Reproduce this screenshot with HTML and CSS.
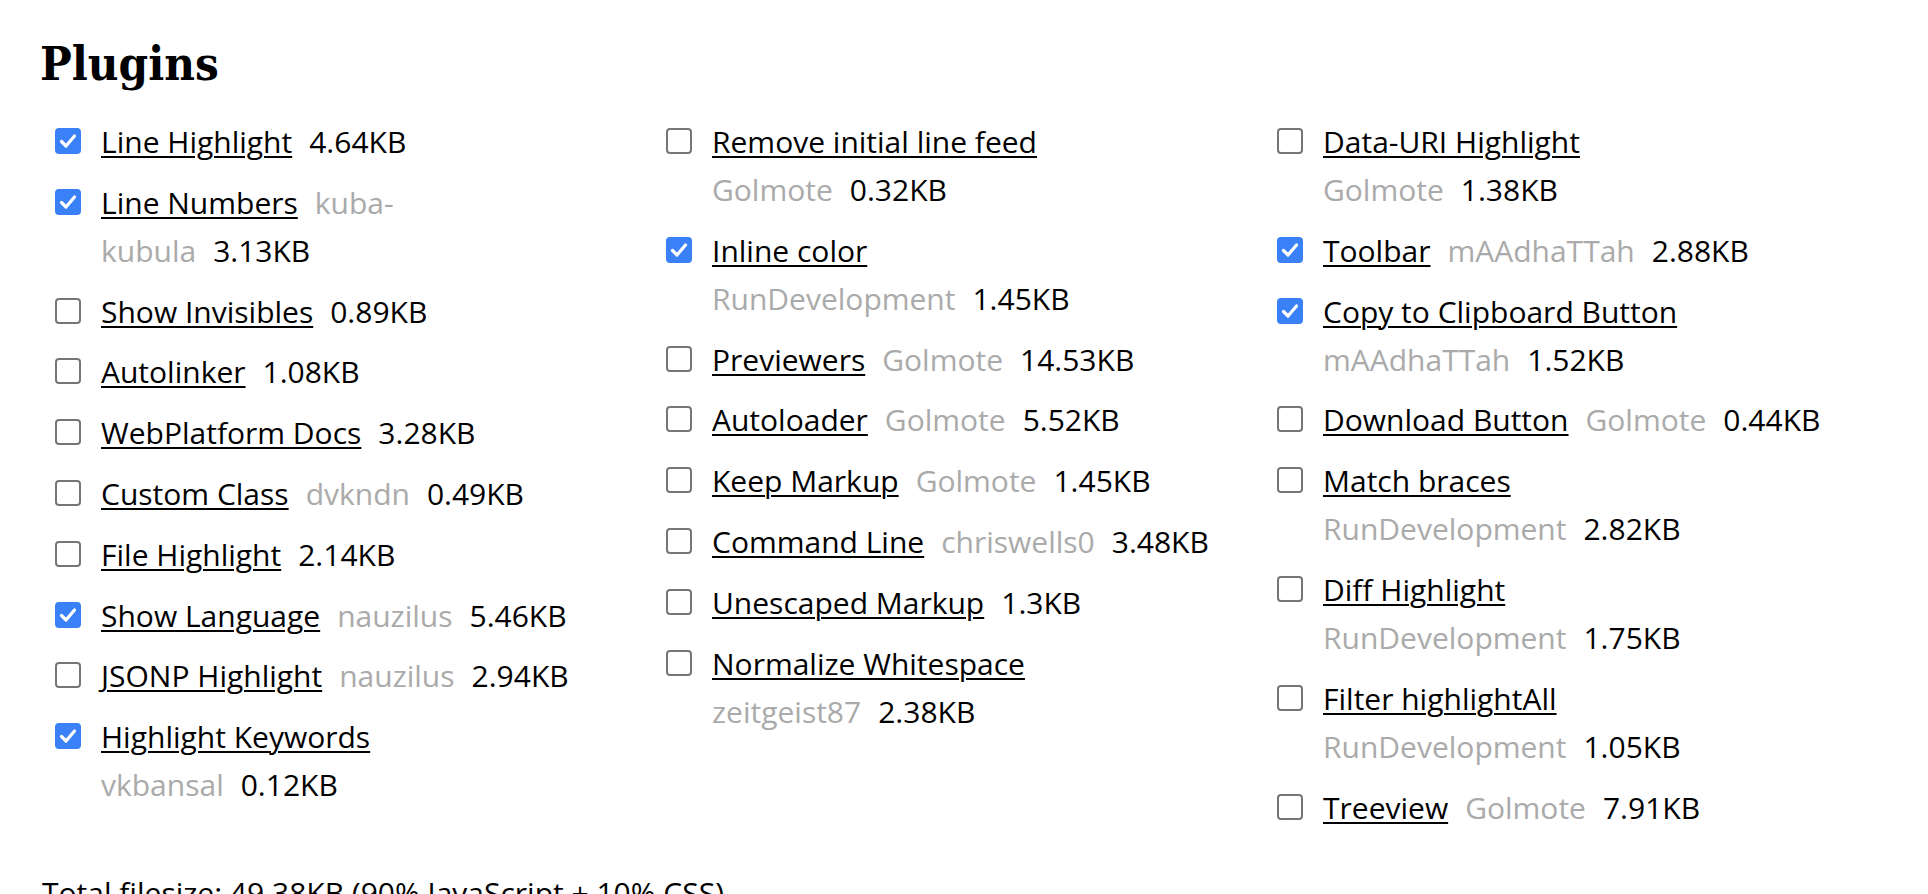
FILE: index.html
```html
<!DOCTYPE html>
<html lang="en">
<head>
<meta charset="utf-8">
<title>Plugins</title>
<link rel="stylesheet" href="styles.css">
</head>
<body>
<main class="page">
  <h2 class="title">Plugins</h2>
  <div class="plugins">
    <ul class="col">
      <li class="item"><span class="box on"><svg viewBox="0 0 26 26"><path d="M6.5 13.5l4.5 4.5 8.5-10"/></svg></span><span class="text"><a class="name" href="#">Line Highlight</a><span class="size">4.64KB</span></span></li>
      <li class="item"><span class="box on"><svg viewBox="0 0 26 26"><path d="M6.5 13.5l4.5 4.5 8.5-10"/></svg></span><span class="text"><a class="name" href="#">Line Numbers</a><span class="owner">kuba-<br>kubula</span><span class="size">3.13KB</span></span></li>
      <li class="item"><span class="box"></span><span class="text"><a class="name" href="#">Show Invisibles</a><span class="size">0.89KB</span></span></li>
      <li class="item"><span class="box"></span><span class="text"><a class="name" href="#">Autolinker</a><span class="size">1.08KB</span></span></li>
      <li class="item"><span class="box"></span><span class="text"><a class="name" href="#">WebPlatform Docs</a><span class="size">3.28KB</span></span></li>
      <li class="item"><span class="box"></span><span class="text"><a class="name" href="#">Custom Class</a><span class="owner">dvkndn</span><span class="size">0.49KB</span></span></li>
      <li class="item"><span class="box"></span><span class="text"><a class="name" href="#">File Highlight</a><span class="size">2.14KB</span></span></li>
      <li class="item"><span class="box on"><svg viewBox="0 0 26 26"><path d="M6.5 13.5l4.5 4.5 8.5-10"/></svg></span><span class="text"><a class="name" href="#">Show Language</a><span class="owner">nauzilus</span><span class="size">5.46KB</span></span></li>
      <li class="item"><span class="box"></span><span class="text"><a class="name" href="#">JSONP Highlight</a><span class="owner">nauzilus</span><span class="size">2.94KB</span></span></li>
      <li class="item"><span class="box on"><svg viewBox="0 0 26 26"><path d="M6.5 13.5l4.5 4.5 8.5-10"/></svg></span><span class="text"><a class="name" href="#">Highlight Keywords</a><br><span class="owner lead">vkbansal</span><span class="size">0.12KB</span></span></li>
    </ul>
    <ul class="col">
      <li class="item"><span class="box"></span><span class="text"><a class="name" href="#">Remove initial line feed</a><br><span class="owner lead">Golmote</span><span class="size">0.32KB</span></span></li>
      <li class="item"><span class="box on"><svg viewBox="0 0 26 26"><path d="M6.5 13.5l4.5 4.5 8.5-10"/></svg></span><span class="text"><a class="name" href="#">Inline color</a><br><span class="owner lead">RunDevelopment</span><span class="size">1.45KB</span></span></li>
      <li class="item"><span class="box"></span><span class="text"><a class="name" href="#">Previewers</a><span class="owner">Golmote</span><span class="size">14.53KB</span></span></li>
      <li class="item"><span class="box"></span><span class="text"><a class="name" href="#">Autoloader</a><span class="owner">Golmote</span><span class="size">5.52KB</span></span></li>
      <li class="item"><span class="box"></span><span class="text"><a class="name" href="#">Keep Markup</a><span class="owner">Golmote</span><span class="size">1.45KB</span></span></li>
      <li class="item"><span class="box"></span><span class="text"><a class="name" href="#">Command Line</a><span class="owner">chriswells0</span><span class="size">3.48KB</span></span></li>
      <li class="item"><span class="box"></span><span class="text"><a class="name" href="#">Unescaped Markup</a><span class="size">1.3KB</span></span></li>
      <li class="item"><span class="box"></span><span class="text"><a class="name" href="#">Normalize Whitespace</a><br><span class="owner lead">zeitgeist87</span><span class="size">2.38KB</span></span></li>
    </ul>
    <ul class="col">
      <li class="item"><span class="box"></span><span class="text"><a class="name" href="#">Data-URI Highlight</a><br><span class="owner lead">Golmote</span><span class="size">1.38KB</span></span></li>
      <li class="item"><span class="box on"><svg viewBox="0 0 26 26"><path d="M6.5 13.5l4.5 4.5 8.5-10"/></svg></span><span class="text"><a class="name" href="#">Toolbar</a><span class="owner">mAAdhaTTah</span><span class="size">2.88KB</span></span></li>
      <li class="item"><span class="box on"><svg viewBox="0 0 26 26"><path d="M6.5 13.5l4.5 4.5 8.5-10"/></svg></span><span class="text"><a class="name" href="#">Copy to Clipboard Button</a><br><span class="owner lead">mAAdhaTTah</span><span class="size">1.52KB</span></span></li>
      <li class="item"><span class="box"></span><span class="text"><a class="name" href="#">Download Button</a><span class="owner">Golmote</span><span class="size">0.44KB</span></span></li>
      <li class="item"><span class="box"></span><span class="text"><a class="name" href="#">Match braces</a><br><span class="owner lead">RunDevelopment</span><span class="size">2.82KB</span></span></li>
      <li class="item"><span class="box"></span><span class="text"><a class="name" href="#">Diff Highlight</a><br><span class="owner lead">RunDevelopment</span><span class="size">1.75KB</span></span></li>
      <li class="item"><span class="box"></span><span class="text"><a class="name" href="#">Filter highlightAll</a><br><span class="owner lead">RunDevelopment</span><span class="size">1.05KB</span></span></li>
      <li class="item"><span class="box"></span><span class="text"><a class="name" href="#">Treeview</a><span class="owner">Golmote</span><span class="size">7.91KB</span></span></li>
    </ul>
  </div>
  <p class="total">Total filesize: 49.38KB (90% JavaScript + 10% CSS)</p>
</main>
</body>
</html>
```

FILE: styles.css
```css
html, body {
  margin: 0;
  background: #fff;
}

body {
  font-family: "Open Sans", "Liberation Sans", sans-serif;
  font-size: 30px;
  line-height: 48px;
  color: #000;
}

.page {
  padding: 36px 40px 0 40px;
}

.title {
  margin: 0;
  font-family: "DejaVu Serif Condensed", "DejaVu Serif", serif;
  font-weight: bold;
  font-size: 47px;
  line-height: 56px;
}

.plugins {
  display: grid;
  grid-template-columns: repeat(3, 611px);
  margin-top: 26px;
}

.col {
  list-style: none;
  margin: 0;
  padding: 0 0 0 15px;
  display: flex;
  flex-direction: column;
  gap: 12.8px;
}

.item {
  display: flex;
  align-items: flex-start;
  gap: 20px;
}

.box {
  flex: none;
  box-sizing: border-box;
  width: 26px;
  height: 26px;
  margin-top: 10px;
  border: 2px solid #767676;
  border-radius: 4px;
  background: #fff;
}

.box.on {
  background: #3a80f6;
  border-color: #3a80f6;
}

.box svg {
  display: block;
  width: 26px;
  height: 26px;
  margin: -2px;
}

.box svg path {
  fill: none;
  stroke: #fff;
  stroke-width: 3.2;
  stroke-linecap: round;
  stroke-linejoin: round;
}

.text {
  white-space: nowrap;
}

.name {
  color: #000;
  text-decoration: underline;
  text-decoration-thickness: 2px;
  text-underline-offset: 3px;
}

.owner {
  color: #aaa;
  margin-left: 17px;
}

.size {
  margin-left: 17px;
}

.owner.lead {
  margin-left: 0;
}

.total {
  margin: 37px 0 0 2px;
}
```
